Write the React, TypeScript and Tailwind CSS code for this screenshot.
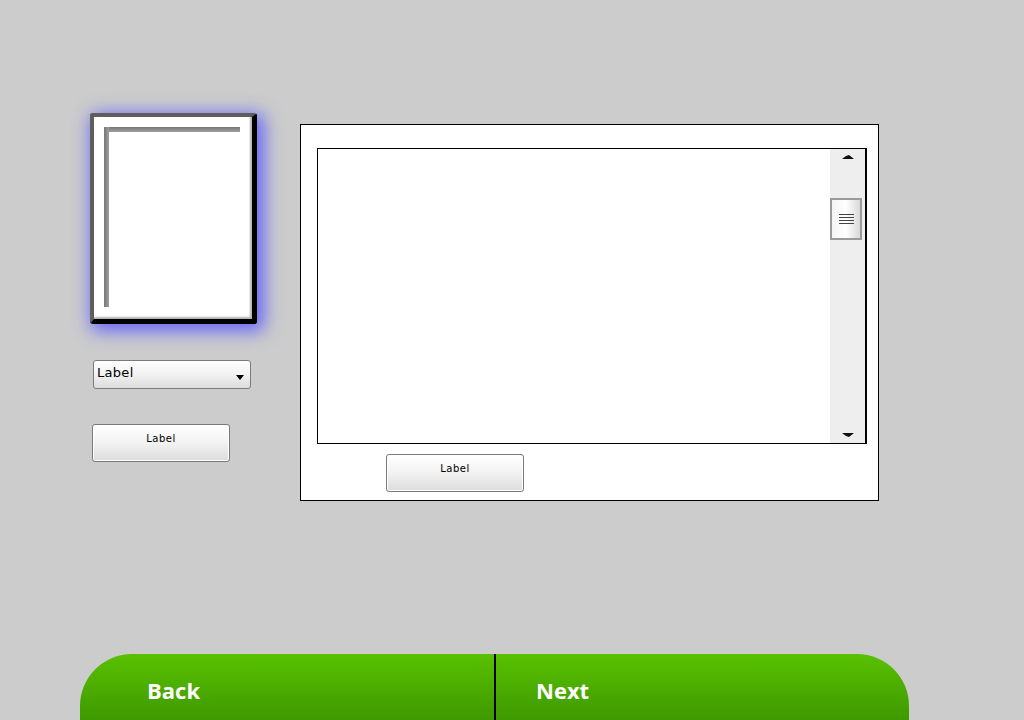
import React from "react";

const btnCls =
  "flex items-center justify-center w-[138px] h-[38px] rounded-[3px] border border-[#7a7a7a] bg-gradient-to-b from-white via-[#f2f2f2] to-[#dcdcdc] shadow-[inset_0_0_0_1px_#ffffff] text-[10px] text-black tracking-[0.5px] pb-[9px] font-['DejaVu_Sans',sans-serif]";

const App = () => {
  return (
    <div className="relative w-[1024px] h-[720px] overflow-hidden bg-[#cccccc] font-['DejaVu_Sans',sans-serif]">
      <div className="flex pt-[113px] pl-[90px]">
        {/* left column */}
        <div className="flex flex-col w-[167px]">
          <div className="w-[167px] h-[211px] rounded-[3px] border-t-[4px] border-l-[4px] border-r-[5px] border-b-[5px] border-t-[#5e5e5e] border-l-[#5e5e5e] border-r-black border-b-black shadow-[4px_4px_18px_3px_rgba(90,90,255,0.9)]">
            <div className="relative w-full h-full bg-white shadow-[inset_-2px_-2px_2px_rgba(0,0,0,0.3),inset_2px_2px_1px_rgba(255,255,255,1)]">
              <div className="absolute left-[10px] top-[10px] w-[136px] h-[5px] bg-gradient-to-b from-[#777] to-[#a0a0a0]" />
              <div className="absolute left-[10px] top-[10px] w-[5px] h-[180px] bg-gradient-to-r from-[#777] to-[#a0a0a0]" />
            </div>
          </div>
          <div className="ml-[3px] mt-[36px] w-[158px] h-[29px] rounded-[3px] border border-[#7a7a7a] bg-gradient-to-b from-white via-[#f2f2f2] to-[#dcdcdc] flex items-start justify-between pl-[3px] pr-[6px] pt-[5px]">
            <span className="text-[13px] leading-[14px] text-black tracking-[0.3px]">Label</span>
            <svg width="8" height="6" viewBox="0 0 8 6" className="mt-[9px]">
              <path d="M0 0 L8 0 L4 5 Z" fill="#000" />
            </svg>
          </div>
          <div className="ml-[2px] mt-[35px]">
            <div className={btnCls}>Label</div>
          </div>
        </div>

        {/* panel */}
        <div className="ml-[43px] mt-[11px] w-[579px] h-[377px] bg-white border border-black flex flex-col pt-[23px] pl-[16px]">
          <div className="flex w-[550px] h-[296px] border border-black border-r-0">
            <div className="flex-1" />
            <div className="w-[37px] h-full bg-[#eeeeee] border-r-2 border-black flex flex-col items-center">
              <svg width="12" height="4" viewBox="0 0 12 4" className="mt-[6px]">
                <path d="M0 4 L4 1 L7 0 L12 4 Z" fill="#111" />
              </svg>
              <div className="mt-[39px] w-[32px] h-[42px] border-2 border-[#9a9a9a] bg-gradient-to-r from-[#f4f4f4] via-[#ffffff] to-[#d8d8d8] flex flex-col items-center justify-center gap-[2px] -ml-[3px]">
                <div className="w-[15px] h-[1px] bg-[#444]" />
                <div className="w-[15px] h-[1px] bg-[#444]" />
                <div className="w-[15px] h-[1px] bg-[#444]" />
                <div className="w-[15px] h-[1px] bg-[#444]" />
              </div>
              <div className="flex-1" />
              <svg width="12" height="4" viewBox="0 0 12 4" className="mb-[6px]">
                <path d="M0 0 L12 0 L7 4 L4 3 Z" fill="#111" />
              </svg>
            </div>
          </div>
          <div className="ml-[69px] mt-[10px]">
            <div className={btnCls}>Label</div>
          </div>
        </div>
      </div>

      {/* bottom nav */}
      <div className="absolute left-[80px] top-[654px] w-[829px] h-[66px] rounded-t-[52px] bg-gradient-to-b from-[#58c100] to-[#3f9900] flex font-['Open_Sans',sans-serif]">
        <div className="w-[416px] h-full border-r-2 border-black flex items-start pl-[67px] pt-[23px]">
          <span className="text-[22px] leading-[26px] font-bold text-white">Back</span>
        </div>
        <div className="flex-1 flex items-start pl-[40px] pt-[23px]">
          <span className="text-[22px] leading-[26px] font-bold text-white">Next</span>
        </div>
      </div>
    </div>
  );
};

export default App;
